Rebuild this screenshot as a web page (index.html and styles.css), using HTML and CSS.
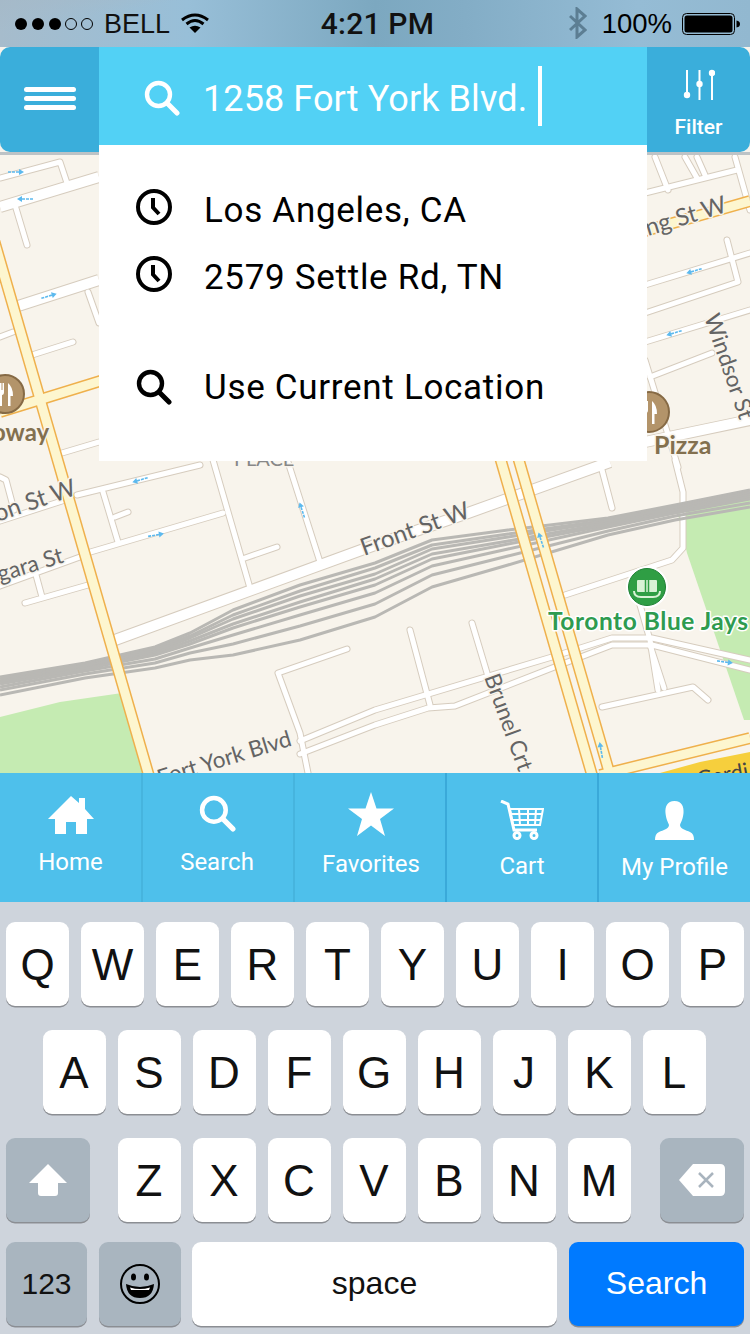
FILE: index.html
```html
<!DOCTYPE html>
<html lang="en">
<head>
<meta charset="utf-8">
<title>Search location</title>
<link rel="stylesheet" href="styles.css">
</head>
<body>
<svg class="defs" width="0" height="0" aria-hidden="true">
  <defs>
    <symbol id="i-search" viewBox="0 0 36 36">
      <circle cx="14.5" cy="14.5" r="11.5" fill="none" stroke="currentColor" stroke-width="4.4"/>
      <path d="M23 23L33 33" fill="none" stroke="currentColor" stroke-width="5" stroke-linecap="round"/>
    </symbol>
    <symbol id="i-clock" viewBox="0 0 36 36">
      <circle cx="18" cy="18" r="16" fill="none" stroke="currentColor" stroke-width="4"/>
      <path d="M17 9V18.500L23 25" fill="none" stroke="currentColor" stroke-width="4"/>
    </symbol>
    <symbol id="m-arrow" viewBox="0 0 18 8" overflow="visible">
      <path d="M1 4H14" stroke="#5cb9ee" stroke-width="1.600" stroke-dasharray="3 1" fill="none"/>
      <path d="M12 1L17 4L12 7Z" fill="#5cb9ee"/>
    </symbol>
    <g id="poi-fork">
      <path d="M-8-11V-2Q-8 1-5.500 1V12H-3V1Q-1 1-1-2V-11H-2.500V-4H-3.500V-11H-5V-4H-6V-11Z" fill="#fff"/>
      <path d="M3-11Q8-7 8 2H5.500V12H3Z" fill="#fff"/>
    </g>
    <g id="thin-roads" fill="none">
      <path d="M0 521L65 500M77 495L200 465"/>
      <path d="M103 492L118 542M115 517L128 512"/>
      <path d="M0 586L80 557M87 553L223 513"/>
      <path d="M213 460L250 588M245 558L277 547"/>
      <path d="M288 462L320 562"/>
      <path d="M25 603L88 585M36 575L42 597"/>
      <path d="M347 649L278 673L300 733L308 773"/>
      <path d="M300 741L375 710L552 657L612 638L652 638L750 660"/>
      <path d="M300 754L375 725L428 708L455 706L552 668L612 645L652 645L750 670"/>
      <path d="M410 630L430 705M472 623L487 673"/>
      <path d="M602 470L612 508"/>
      <path d="M675 460L683 492L683 548L672 560L565 595"/>
      <path d="M640 605L650 640L658 690M650 645L664 688"/>
      <path d="M602 707L693 687L708 700"/>
      <path d="M0 178L60 162L67 183"/>
      <path d="M15 205L27 245"/>
      <path d="M0 337L13 332M32 355L73 342"/>
      <path d="M88 292L99 323M62 453L99 442"/>
      <path d="M0 477L6 480L14 510"/>
      <path d="M645 193L737 170"/>
      <path d="M655 157L668 190M685 157L697 178M697 157L705 175M735 157L750 210"/>
      <path d="M645 285L750 253"/>
      <path d="M645 313L738 282L727 240"/>
      <path d="M645 342L750 310"/>
      <path d="M650 377L712 353"/>
      <path d="M645 360L678 467"/>
    </g>
    <g id="wide-roads" fill="none">
      <path d="M0 207L99 177"/>
      <path d="M15 307L99 280"/>
      <path d="M115 640L375 545L468 513L610 462"/>
      <path d="M645 442L750 420"/>
    </g>
    <g id="yellow-roads" fill="none">
      <path d="M-6 240L153 790"/>
      <path d="M0 412L110 378"/>
      <path d="M495 440L592 775"/>
      <path d="M513 440L610 775"/>
      <path d="M645 231L750 201"/>
      <path d="M600 775L750 738"/>
    </g>
  </defs>
</svg>

<main class="app">
  <header class="status">
    <div class="status-left">
      <svg class="signal" width="80" height="14" viewBox="0 0 80 14" aria-hidden="true">
        <circle cx="6" cy="7" r="6"/><circle cx="23" cy="7" r="6"/><circle cx="40" cy="7" r="6"/>
        <circle class="hollow" cx="56" cy="7" r="5.500"/><circle class="hollow" cx="72" cy="7" r="5.500"/>
      </svg>
      <span class="carrier">BELL</span>
      <svg class="wifi" width="28" height="20" viewBox="0 0 28 20" aria-hidden="true">
        <path d="M1 7Q14-3 27 7" /><path d="M5.500 11Q14 4 22.500 11"/>
        <path class="wifi-dot" d="M8.500 14.500Q14 11 19.500 14.500L14 20Z"/>
      </svg>
    </div>
    <div class="status-time">4:21 PM</div>
    <div class="status-right">
      <svg class="bt" width="18" height="32" viewBox="0 0 18 32" aria-hidden="true">
        <path d="M1 9L16 23L8 30V2L16 9L1 23" fill="none" stroke="#5c7e93" stroke-width="3"/>
      </svg>
      <span class="batt-text">100%</span>
      <svg class="battery" width="58" height="22" viewBox="0 0 58 22" aria-hidden="true">
        <rect x="0.500" y="0.500" width="52" height="21" rx="4" fill="none" stroke="#000"/>
        <rect x="2.500" y="2.500" width="48" height="17" rx="2.500"/>
        <path d="M54.500 7.500Q58 8 58 11T54.500 14.500Z"/>
      </svg>
    </div>
  </header>

  <section class="searchbar">
    <button class="menu-btn" aria-label="Menu"><span></span><span></span><span></span></button>
    <div class="search-col">
      <div class="search-field">
        <svg class="search-icon"><use href="#i-search"/></svg>
        <span class="search-text">1258 Fort York Blvd.</span>
        <span class="caret"></span>
      </div>
      <ul class="dropdown">
        <li class="dd-row"><svg class="dd-icon"><use href="#i-clock"/></svg><span>Los Angeles, CA</span></li>
        <li class="dd-row"><svg class="dd-icon"><use href="#i-clock"/></svg><span>2579 Settle Rd, TN</span></li>
        <li class="dd-row dd-current"><svg class="dd-icon"><use href="#i-search"/></svg><span>Use Current Location</span></li>
      </ul>
    </div>
    <button class="filter-btn">
      <svg class="filter-icon" width="34" height="32" viewBox="0 0 34 32" aria-hidden="true">
        <path d="M6 1V26M18.500 1V31M31 6V31" fill="none" stroke="#fff" stroke-width="2"/>
        <circle cx="6" cy="26" r="3.200"/><circle cx="18.500" cy="15" r="3.200"/><circle cx="31" cy="4" r="3.200"/>
      </svg>
      <span>Filter</span>
    </button>
  </section>

  <section class="map">
    <svg class="map-svg" width="750" height="621" viewBox="0 152 750 621" role="img" aria-label="Street map of downtown Toronto">
      <path class="park" d="M0 717L60 702L122 693L148 773H0Z"/>
      <path class="park" d="M677 510L750 493V720H744L687 553Z"/>

      <use class="casing-thin" href="#thin-roads"/>
      <use class="casing-wide" href="#wide-roads"/>
      <use class="fill-thin" href="#thin-roads"/>
      <use class="fill-wide" href="#wide-roads"/>

      <g class="rails">
        <polyline points="0,677 85,663 155,647 190,633 233,610 300,585 375,563 432,540 508,530 608,518 675,505 750,490"/>
        <polyline points="0,679 85,665 155,649 190,636 233,615 300,591 375,568 432,545 508,534 608,520 675,507 750,492"/>
        <polyline points="0,681 85,666 155,651 190,638 233,619 300,596 375,574 432,549 508,537 608,521 675,508 750,493"/>
        <polyline points="0,682 85,668 155,653 190,641 233,624 300,602 375,579 432,554 508,541 608,523 675,510 750,495"/>
        <polyline points="0,684 85,669 155,655 190,644 233,628 300,607 375,585 432,559 508,544 608,525 675,511 750,497"/>
        <polyline points="0,687 85,671 155,659 190,648 233,635 300,615 375,593 432,566 508,549 608,527 675,513 750,499"/>
        <polyline points="0,690 85,674 155,663 190,653 233,644 300,626 375,604 432,575 508,556 608,531 675,516 750,503"/>
        <polyline points="0,695 85,678 155,668 190,660 233,655 300,640 375,617 432,587 508,565 608,535 675,520 750,507"/>
      </g>

      <use class="y-casing" href="#yellow-roads"/>
      <use class="y-fill" href="#yellow-roads"/>
      <path class="gardiner" d="M660 773L700 762L750 752V773Z"/>

      <use href="#m-arrow" x="7" y="168" width="18" height="8"/>
      <use href="#m-arrow" transform="rotate(180 25 199)" x="16" y="195" width="18" height="8"/>
      <use href="#m-arrow" transform="rotate(-17 49 296)" x="40" y="292" width="18" height="8"/>
      <use href="#m-arrow" transform="rotate(163 140 480)" x="131" y="476" width="18" height="8"/>
      <use href="#m-arrow" transform="rotate(-10 156 535)" x="147" y="531" width="18" height="8"/>
      <use href="#m-arrow" transform="rotate(-108 302 510)" x="293" y="506" width="18" height="8"/>
      <use href="#m-arrow" transform="rotate(-108 541 540)" x="532" y="536" width="18" height="8"/>
      <use href="#m-arrow" transform="rotate(-100 601 750)" x="592" y="746" width="18" height="8"/>
      <use href="#m-arrow" transform="rotate(8 725 662)" x="716" y="658" width="18" height="8"/>
      <use href="#m-arrow" transform="rotate(163 694 271)" x="685" y="267" width="18" height="8"/>
      <use href="#m-arrow" transform="rotate(163 674 333)" x="665" y="329" width="18" height="8"/>

      <g class="poi" transform="translate(5 394)">
        <circle r="19"/><use href="#poi-fork"/>
      </g>
      <g class="poi" transform="translate(649 412)">
        <circle r="20"/><use href="#poi-fork"/>
      </g>
      <g class="stadium" transform="translate(647 587)">
        <circle class="st-ring" r="21"/>
        <circle class="st-disc" r="18.500"/>
        <rect x="-10" y="-7" width="20" height="12" rx="1"/>
        <path class="st-gap" d="M-1.500-7V5M1.500-7V5"/>
        <path class="st-bowl" d="M-13 4Q-13 10-6 10H6Q13 10 13 4"/>
      </g>

      <g class="labels">
        <text class="lbl" x="648" y="236" transform="rotate(-17 648 236)">ng St W</text>
        <text class="lbl" x="-3" y="521" transform="rotate(-19 0 521)">on St W</text>
        <text class="lbl lbl-sm" x="0" y="582" transform="rotate(-17 0 582)">gara St</text>
        <text class="lbl" x="364" y="556" transform="rotate(-20 364 556)">Front St W</text>
        <text class="lbl lbl-sm" x="160" y="786" transform="rotate(-17 160 786)">Fort York Blvd</text>
        <text class="lbl lbl-sm" x="484" y="677" transform="rotate(70 484 677)">Brunel Crt</text>
        <text class="lbl lbl-sm" x="704" y="317" transform="rotate(71 704 317)">Windsor St</text>
        <text class="lbl lbl-caps" x="234" y="466">PLACE</text>
        <text class="lbl lbl-gardi" x="698" y="787" transform="rotate(-10 698 787)">Gardi</text>
        <text class="lbl-brown lbl-oway" x="-8" y="441">oway</text>
        <text class="lbl-brown" x="654" y="454">Pizza</text>
        <text class="lbl-green" x="548" y="630">Toronto Blue Jays</text>
      </g>
    </svg>
  </section>

  <nav class="tabs">
    <a class="tab tab-home">
      <svg class="tab-icon" width="46" height="38" viewBox="0 0 46 38" aria-hidden="true">
        <path d="M23 0L31 7V2H37V13L46 23H39V38H28V26H18V38H7V23H0Z"/>
      </svg>
      <span>Home</span>
    </a>
    <a class="tab tab-search">
      <svg class="tab-icon tab-search-icon"><use href="#i-search"/></svg>
      <span>Search</span>
    </a>
    <a class="tab tab-fav">
      <svg class="tab-icon" width="46" height="44" viewBox="0 0 46 44" aria-hidden="true">
        <path d="M23 0L28.500 16.500H46L32 27L37 44L23 33.500L9 44L14 27L0 16.500H17.500Z"/>
      </svg>
      <span>Favorites</span>
    </a>
    <a class="tab tab-cart">
      <svg class="tab-icon cart-svg" width="44" height="40" viewBox="0 0 44 40" aria-hidden="true">
        <path d="M1 1L8 4L14 30H37" class="c-thick"/>
        <path d="M10 9H43L40 25H13Z" class="c-grid"/>
        <path d="M11 14H42M12 20H41M19 9L20 25M28 9V25M36 9L35 25" class="c-grid"/>
        <circle cx="17" cy="35.500" r="3" class="c-thick"/><circle cx="34" cy="35.500" r="3" class="c-thick"/>
      </svg>
      <span>Cart</span>
    </a>
    <a class="tab tab-profile">
      <svg class="tab-icon" width="39" height="39" viewBox="0 0 39 39" aria-hidden="true">
        <path d="M19.500 0C27 0 29 6 28.500 12C28 18 26 21 25 24C25 28 31 29 35 31C38 32.500 39 35 39 39H0C0 35 1 32.500 4 31C8 29 14 28 14 24C13 21 11 18 10.500 12C10 6 12 0 19.500 0Z"/>
      </svg>
      <span>My Profile</span>
    </a>
  </nav>

  <section class="keyboard">
    <div class="kb-row">
      <span class="key">Q</span><span class="key">W</span><span class="key">E</span><span class="key">R</span><span class="key">T</span><span class="key">Y</span><span class="key">U</span><span class="key">I</span><span class="key">O</span><span class="key">P</span>
    </div>
    <div class="kb-row kb-row2">
      <span class="key">A</span><span class="key">S</span><span class="key">D</span><span class="key">F</span><span class="key">G</span><span class="key">H</span><span class="key">J</span><span class="key">K</span><span class="key">L</span>
    </div>
    <div class="kb-row kb-row3">
      <span class="key key-dark key-shift">
        <svg width="38" height="32" viewBox="0 0 38 32" aria-hidden="true"><path d="M19 0L38 19H29V29Q29 32 26 32H12Q9 32 9 29V19H0Z" fill="#fff"/></svg>
      </span>
      <div class="kb-letters">
        <span class="key">Z</span><span class="key">X</span><span class="key">C</span><span class="key">V</span><span class="key">B</span><span class="key">N</span><span class="key">M</span>
      </div>
      <span class="key key-dark key-shift">
        <svg width="46" height="32" viewBox="0 0 46 32" aria-hidden="true">
          <path d="M14 0H41Q46 0 46 5V27Q46 32 41 32H14L0 16Z" fill="#fff"/>
          <path d="M20 9L34 23M34 9L20 23" stroke="#a9b4be" stroke-width="2.500" fill="none"/>
        </svg>
      </span>
    </div>
    <div class="kb-row kb-row4">
      <span class="key key-dark key-123">123</span>
      <span class="key key-dark key-emoji">
        <svg width="42" height="42" viewBox="0 0 42 42" aria-hidden="true">
          <circle cx="21" cy="21" r="19" fill="none" stroke="#000" stroke-width="2"/>
          <ellipse cx="14.500" cy="14" rx="2.500" ry="3.500"/><ellipse cx="27.500" cy="14" rx="2.500" ry="3.500"/>
          <path d="M7 21Q21 27 35 21Q34 35 21 35Q8 35 7 21Z"/>
          <path d="M11 24.500Q21 27.500 31 24.500L30 27H12Z" fill="#fff"/>
        </svg>
      </span>
      <span class="key key-space">space</span>
      <span class="key key-go">Search</span>
    </div>
  </section>
</main>
</body>
</html>
```
FILE: styles.css
```css
* { box-sizing: border-box; }
html, body { margin: 0; padding: 0; }
body { background: #ced4dc; }
.defs { position: absolute; }
ul { list-style: none; margin: 0; padding: 0; }
button { border: 0; padding: 0; font: inherit; color: inherit; }

.app {
  width: 750px;
  height: 1334px;
  display: flex;
  flex-direction: column;
  overflow: hidden;
  position: relative;
  background: #f7f3ec;
  font-family: Roboto, "Liberation Sans", sans-serif;
}

/* Status bar */
.status {
  height: 47px;
  flex: none;
  display: grid;
  grid-template-columns: 1fr auto 1fr;
  align-items: center;
  padding: 0 10px 0 15px;
  color: #000;
  font-family: "Liberation Sans", Arial, sans-serif;
  background:
    linear-gradient(170deg, rgba(165,185,200,.8) 0, rgba(165,185,200,0) 18%),
    linear-gradient(90deg, #a6bccc 0, #98bfd8 25%, #7ca8c0 50%, #83adc6 62%, #95bcd5 85%, #92b8d0 100%);
}
.status-left, .status-right { display: flex; align-items: center; }
.status-right { justify-content: flex-end; }
.signal { margin-right: 9px; }
.signal .hollow { fill: none; stroke: #000; stroke-width: 1; }
.carrier { font-size: 27px; line-height: 30px; margin-right: 11px; color: #111; }
.wifi { margin-top: -2px; }
.wifi path { fill: none; stroke: #000; stroke-width: 3; }
.wifi .wifi-dot { fill: #000; stroke: none; }
.status-time { font-family: Roboto, "Liberation Sans", sans-serif; font-size: 30px; font-weight: 500; line-height: 34px; margin-top: 1px; letter-spacing: .2px; color: #111; }
.bt { margin-right: 15px; margin-top: -2px; }
.batt-text { font-size: 27.500px; line-height: 32px; margin-right: 10px; }

/* Search bar */
.searchbar {
  height: 105px;
  flex: none;
  display: flex;
  position: relative;
  z-index: 2;
  background: #f7f3ec;
  box-shadow: 0 3px 0 #bdc3c6;
}
.menu-btn {
  width: 99px;
  background: #3aaedb;
  border-radius: 10px 0 0 10px;
  display: flex;
  flex-direction: column;
  align-items: center;
  justify-content: center;
  gap: 4px;
  padding-bottom: 2px;
}
.menu-btn span { display: block; width: 52px; height: 5px; background: #fff; border-radius: 3px; }
.search-col { width: 548px; position: relative; }
.search-field {
  height: 98px;
  background: #52d1f5;
  display: flex;
  align-items: center;
  padding-left: 45px;
  color: #fff;
}
.search-icon { width: 36px; height: 36px; margin-right: 23px; margin-top: 4px; flex: none; }
.search-text { font-size: 36px; line-height: 44px; margin-top: 6px; letter-spacing: .1px; white-space: nowrap; }
.caret { width: 4px; height: 60px; background: #fff; margin-left: 11px; }
.dropdown {
  position: absolute;
  left: 0;
  right: 0;
  top: 98px;
  height: 316px;
  background: #fff;
  padding-top: 32px;
  color: #000;
}
.dd-row {
  height: 67px;
  display: flex;
  align-items: center;
  padding-left: 37px;
  font-size: 35px;
  letter-spacing: .7px;
}
.dd-icon { width: 36px; height: 36px; margin-right: 32px; flex: none; margin-top: -8px; }
.dd-current { margin-top: 43px; }
.dd-current .dd-icon { margin-top: -2px; }
.filter-btn {
  width: 103px;
  background: #3aaedb;
  border-radius: 0 10px 10px 0;
  display: flex;
  flex-direction: column;
  align-items: center;
  padding-top: 22px;
  color: #fff;
  font-size: 21px;
  font-weight: 500;
}
.filter-icon { fill: #fff; margin-bottom: 13px; margin-left: -2px; }
.filter-btn span { line-height: 26px; }

/* Map */
.map { height: 621px; flex: none; background: #f8f4ec; }
.map-svg { display: block; }
.park { fill: #c5ebb2; }
.casing-thin { stroke: #d6ccbe; stroke-width: 7px; stroke-linecap: round; stroke-linejoin: round; }
.casing-wide { stroke: #d6ccbe; stroke-width: 12px; }
.fill-thin { stroke: #fff; stroke-width: 5px; stroke-linecap: round; stroke-linejoin: round; }
.fill-wide { stroke: #fff; stroke-width: 10px; }
.rails polyline { fill: none; stroke: #b9b8b4; stroke-width: 3px; stroke-linejoin: round; }
.y-casing { stroke: #efb04c; stroke-width: 12px; }
.y-fill { stroke: #fdf6cf; stroke-width: 9px; }
.gardiner { fill: #f6cf3d; }
.poi circle { fill: #b3946a; stroke: #866a45; stroke-width: 2px; }
.st-ring { fill: #fff; }
.st-disc { fill: #2f9e44; stroke: #1e8034; stroke-width: 1px; }
.stadium rect { fill: #d8f2d5; }
.st-gap { stroke: #2f9e44; stroke-width: 1.500px; fill: none; }
.st-bowl { fill: none; stroke: #d8f2d5; stroke-width: 2px; }
.labels text { font-family: Lato, "Liberation Sans", sans-serif; paint-order: stroke; stroke-linejoin: round; }
.lbl { font-size: 24px; fill: #646464; stroke: #f8f4ec; stroke-width: 3px; }
.lbl-sm { font-size: 22.500px; }
.lbl-caps { font-size: 20px; fill: #888; }
.lbl-gardi { font-size: 22px; fill: #444; stroke: #f6cf3d; }
.lbl-brown { font-size: 25px; font-weight: 700; fill: #83704f; stroke: #f8f4ec; stroke-width: 3px; }
.lbl-oway { font-size: 24px; }
.lbl-green { font-size: 24.500px; font-weight: 700; letter-spacing: .55px; fill: #2e9b50; stroke: #fff; stroke-width: 3px; }

/* Tab bar */
.tabs {
  height: 129px;
  flex: none;
  display: flex;
  background: #4ec0eb;
  color: #fff;
  position: relative;
}
.tab {
  display: flex;
  flex-direction: column;
  align-items: center;
  font-size: 24px;
  line-height: 28px;
  width: 152px;
  border-right: 2px solid #46b4de;
}
.tab-home { width: 143px; padding-top: 23px; }
.tab-home span { margin-top: 14px; }
.tab-search { padding-top: 22px; padding-right: 2px; }
.tab-search span { margin-top: 16px; }
.tab-fav { padding-top: 19px; padding-left: 2px; border-right-color: #3aa9d9; }
.tab-fav span { margin-top: 14px; }
.tab-cart { padding-top: 27px; border-right-color: #3aa9d9; }
.tab-cart span { margin-top: 12px; }
.tab-profile { width: 151px; padding-top: 28px; border-right: 0; }
.tab-profile span { margin-top: 13px; }
.tab-icon { fill: #fff; flex: none; }
.tab-search-icon { width: 37px; height: 37px; }
.cart-svg path, .cart-svg circle { fill: none; stroke: #fff; }
.c-thick { stroke-width: 3px; }
.c-grid { stroke-width: 2px; }

/* Keyboard */
.keyboard {
  flex: 1;
  padding: 20px 6px 0;
  display: flex;
  flex-direction: column;
  gap: 24px;
  background: #ced4dc;
  font-family: "Liberation Sans", Arial, sans-serif;
}
.kb-row { display: flex; justify-content: center; gap: 12px; }
.kb-row2 { padding-right: 2px; }
.kb-row3 { justify-content: space-between; }
.kb-letters { display: flex; gap: 12px; margin-right: 2px; }
.kb-row4 { justify-content: flex-start; gap: 12px; margin-top: -4px; }
.key {
  width: 63px;
  height: 84px;
  border-radius: 9px;
  background: #fff;
  box-shadow: 0 1.500px 0 #8b8e93;
  display: flex;
  align-items: center;
  justify-content: center;
  font-size: 44px;
  padding-top: 2px;
  color: #111;
}
.key-dark { background: #a9b5bf; }
.key-shift { width: 84px; padding-top: 0; }
.key-123 { width: 81px; font-size: 30px; padding-top: 0; }
.key-emoji { width: 82px; margin-right: -1px; padding-top: 0; }
.key-space { width: 365px; font-size: 32px; padding: 0 0 2px; }
.key-go { width: 175px; background: #007aff; color: #fff; font-size: 32px; padding: 0 0 2px; }
```
